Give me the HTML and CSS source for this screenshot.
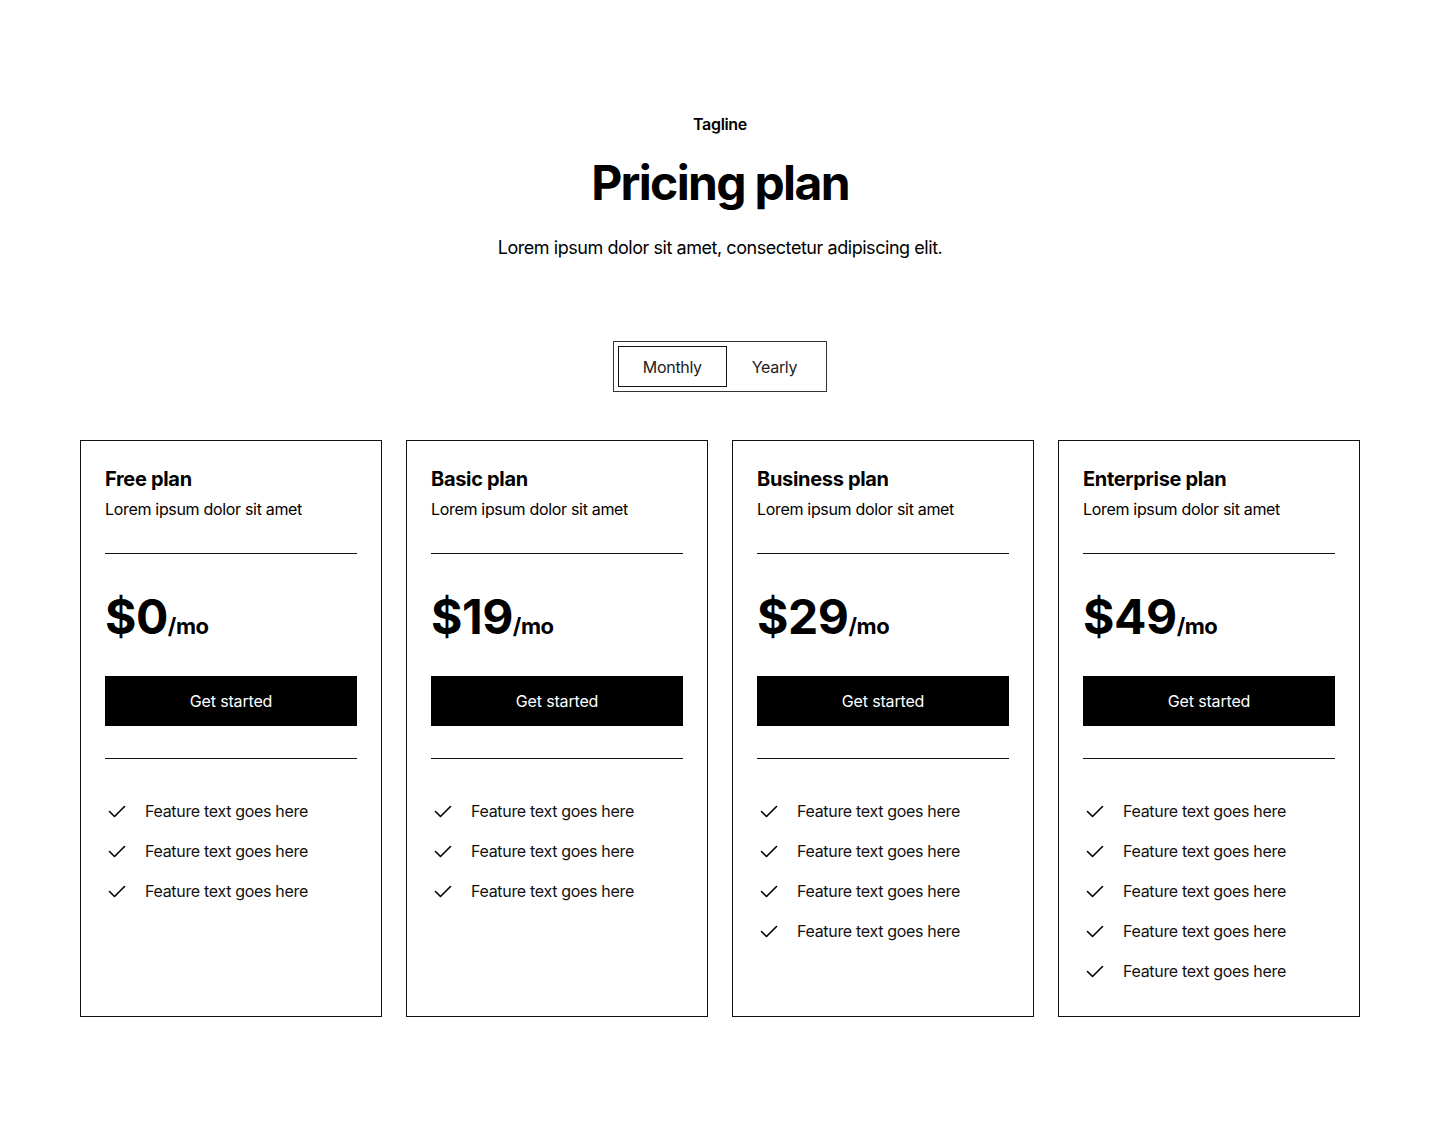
FILE: index.html
```html
<!DOCTYPE html>
<html lang="en">
<head>
    <meta charset="UTF-8">
    <meta name="viewport" content="width=device-width, initial-scale=1.0">
    <link rel="stylesheet" href="styles.css">
    <title>Pricing plan</title>
</head>
<body>
    <section class="pricing">
        <div class="pricingHead">
            <p class="tagline">Tagline</p>
            <h1>Pricing plan</h1>
            <p class="lead">Lorem ipsum dolor sit amet, consectetur adipiscing elit.</p>
        </div>

        <div class="toggle">
            <button class="toggleBtn active">Monthly</button>
            <button class="toggleBtn">Yearly</button>
        </div>

        <div class="plans">
            <!-- free -->
            <div class="plan">
                <h3>Free plan</h3>
                <p class="planText">Lorem ipsum dolor sit amet</p>
                <hr class="line">
                <div class="price">$0<span>/mo</span></div>
                <button class="startBtn">Get started</button>
                <hr class="line">
                <ul class="features">
                    <li><svg viewBox="0 0 24 24"><path d="M4.5 12.5l5 5 10-10"/></svg>Feature text goes here</li>
                    <li><svg viewBox="0 0 24 24"><path d="M4.5 12.5l5 5 10-10"/></svg>Feature text goes here</li>
                    <li><svg viewBox="0 0 24 24"><path d="M4.5 12.5l5 5 10-10"/></svg>Feature text goes here</li>
                </ul>
            </div>
            <!-- basic -->
            <div class="plan">
                <h3>Basic plan</h3>
                <p class="planText">Lorem ipsum dolor sit amet</p>
                <hr class="line">
                <div class="price">$19<span>/mo</span></div>
                <button class="startBtn">Get started</button>
                <hr class="line">
                <ul class="features">
                    <li><svg viewBox="0 0 24 24"><path d="M4.5 12.5l5 5 10-10"/></svg>Feature text goes here</li>
                    <li><svg viewBox="0 0 24 24"><path d="M4.5 12.5l5 5 10-10"/></svg>Feature text goes here</li>
                    <li><svg viewBox="0 0 24 24"><path d="M4.5 12.5l5 5 10-10"/></svg>Feature text goes here</li>
                </ul>
            </div>
            <!-- business -->
            <div class="plan">
                <h3>Business plan</h3>
                <p class="planText">Lorem ipsum dolor sit amet</p>
                <hr class="line">
                <div class="price">$29<span>/mo</span></div>
                <button class="startBtn">Get started</button>
                <hr class="line">
                <ul class="features">
                    <li><svg viewBox="0 0 24 24"><path d="M4.5 12.5l5 5 10-10"/></svg>Feature text goes here</li>
                    <li><svg viewBox="0 0 24 24"><path d="M4.5 12.5l5 5 10-10"/></svg>Feature text goes here</li>
                    <li><svg viewBox="0 0 24 24"><path d="M4.5 12.5l5 5 10-10"/></svg>Feature text goes here</li>
                    <li><svg viewBox="0 0 24 24"><path d="M4.5 12.5l5 5 10-10"/></svg>Feature text goes here</li>
                </ul>
            </div>
            <!-- enterprise -->
            <div class="plan">
                <h3>Enterprise plan</h3>
                <p class="planText">Lorem ipsum dolor sit amet</p>
                <hr class="line">
                <div class="price">$49<span>/mo</span></div>
                <button class="startBtn">Get started</button>
                <hr class="line">
                <ul class="features">
                    <li><svg viewBox="0 0 24 24"><path d="M4.5 12.5l5 5 10-10"/></svg>Feature text goes here</li>
                    <li><svg viewBox="0 0 24 24"><path d="M4.5 12.5l5 5 10-10"/></svg>Feature text goes here</li>
                    <li><svg viewBox="0 0 24 24"><path d="M4.5 12.5l5 5 10-10"/></svg>Feature text goes here</li>
                    <li><svg viewBox="0 0 24 24"><path d="M4.5 12.5l5 5 10-10"/></svg>Feature text goes here</li>
                    <li><svg viewBox="0 0 24 24"><path d="M4.5 12.5l5 5 10-10"/></svg>Feature text goes here</li>
                </ul>
            </div>
        </div>
    </section>
</body>
</html>
```

FILE: styles.css
```css
body {
    margin: 0;
    background-color: white;
    color: black;
    font-family: Inter, 'Noto Sans', 'Liberation Sans', sans-serif;
    letter-spacing: -0.02em;
}

.pricing {
    max-width: 1280px;
    margin: 0 auto;
    padding: 112px 80px;
    display: flex;
    flex-direction: column;
    align-items: center;
}

.pricingHead {
    text-align: center;
}
.tagline {
    margin: 0;
    font-size: 16px;
    line-height: 24px;
    font-weight: 600;
}
h1 {
    margin: 18px 0 0;
    font-size: 48px;
    line-height: 58px;
    font-weight: 700;
    letter-spacing: -0.035em;
}
.lead {
    margin: 22px 0 0;
    font-size: 18px;
    line-height: 27px;
    letter-spacing: -0.025em;
}

/* prepinac mesacne / rocne */
.toggle {
    margin-top: 80px;
    display: flex;
    padding: 4px;
    border: 1px solid #333;
}
.toggleBtn {
    font-family: inherit;
    font-size: 16px;
    line-height: 24px;
    letter-spacing: -0.02em;
    color: #222;
    background: white;
    border: 1px solid transparent;
    padding: 7.5px 24px;
    cursor: pointer;
}
.toggleBtn.active {
    border-color: #111;
}

.plans {
    margin-top: 48px;
    width: 100%;
    display: grid;
    grid-template-columns: repeat(4, 1fr);
    gap: 24px;
}

.plan {
    border: 1px solid #111;
    padding: 24px 24px 33px;
    display: flex;
    flex-direction: column;
}
.plan h3 {
    margin: 0;
    font-size: 20px;
    line-height: 28px;
    font-weight: 700;
}
.planText {
    margin: 4px 0 0;
    font-size: 16px;
    line-height: 24px;
}

.line {
    width: 100%;
    margin: 32px 0;
    border: none;
    border-top: 1px solid #111;
    height: 0;
}

.price {
    margin-bottom: 32px;
    height: 58px;
    font-size: 48px;
    line-height: 61px;
    font-weight: 700;
    letter-spacing: -0.01em;
}
.price span {
    font-size: 22px;
    line-height: 1;
    letter-spacing: -0.02em;
}

.startBtn {
    height: 50px;
    background-color: black;
    color: white;
    border: none;
    font-family: inherit;
    font-size: 16px;
    letter-spacing: -0.01em;
    cursor: pointer;
}

.features {
    list-style: none;
    margin: 8px 0 0;
    padding: 0;
    display: flex;
    flex-direction: column;
    gap: 16px;
}
.features li {
    display: flex;
    align-items: center;
    gap: 16px;
    font-size: 16px;
    line-height: 24px;
    color: #111;
}
.features svg {
    width: 24px;
    height: 24px;
    fill: none;
    stroke: black;
    stroke-width: 1.6;
    stroke-linecap: round;
    stroke-linejoin: round;
    flex-shrink: 0;
}
```
